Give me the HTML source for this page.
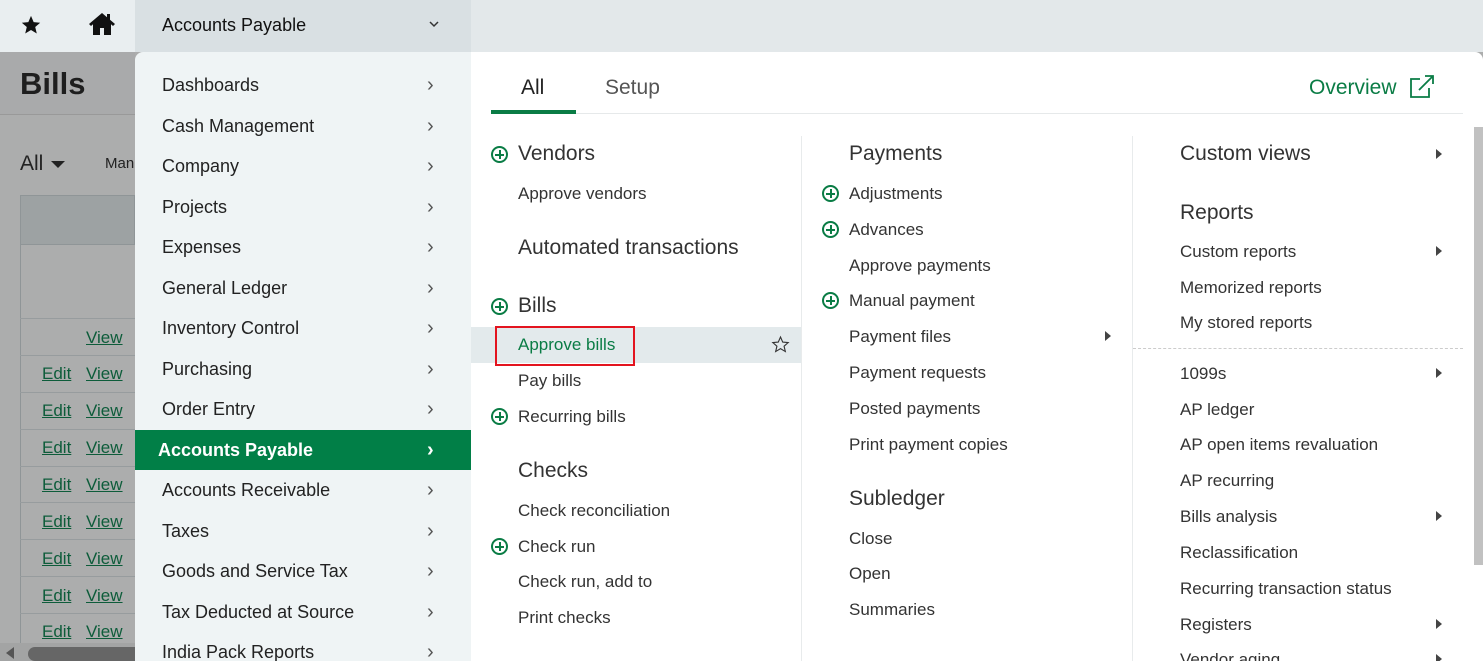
<!DOCTYPE html>
<html style="overflow:hidden;width:1483px;height:661px"><head><meta charset="utf-8"><style>
*{margin:0;padding:0;box-sizing:border-box}
body{width:1483px;height:661px;overflow:hidden;position:relative;font-family:"Liberation Sans",Arial,sans-serif;background:#acadad;color:#333}
.a{position:absolute;white-space:nowrap}
.top{position:absolute;left:0;top:0;width:1483px;height:52px;background:#e3e8ea}
.m{position:absolute;left:135px;top:52px;width:336px;height:609px;background:#eff4f5}
.mi{position:absolute;left:162px;font-size:18px;color:#222;line-height:20px}
.chev{position:absolute;left:427px;font-size:20px;color:#555;line-height:20px}
.rp{position:absolute;left:471px;top:52px;width:1012px;height:609px;background:#fff;border-top-right-radius:8px}
.h{position:absolute;font-size:21px;color:#333;line-height:24px}
.i{position:absolute;font-size:17px;color:#333;line-height:20px}
.plus{position:absolute;width:17px;height:17px;border:2px solid #0a7c45;border-radius:50%}
.plus:before{content:"";position:absolute;left:6px;top:2px;width:1.6px;height:9px;background:#0a7c45}
.plus:after{content:"";position:absolute;left:2px;top:6px;width:9px;height:1.6px;background:#0a7c45}
.tri{position:absolute;width:0;height:0;border-left:6px solid #444;border-top:5px solid transparent;border-bottom:5px solid transparent}
.ev{position:absolute;font-size:17px;color:#0d5c3a;text-decoration:underline;line-height:20px}
.hl{position:absolute;left:20px;width:116px;height:1px;background:#979c9e}
</style></head><body>
<div class="top"></div>
<div class="a" style="left:0;top:0;width:135px;height:52px;background:#e9eef0"></div>
<div class="a" style="left:135px;top:0;width:336px;height:52px;background:#d9e0e3"></div>
<svg class="a" style="left:20px;top:14px" width="22" height="22" viewBox="0 0 24 24"><path d="M12 2l2.9 6.9 7.1.6-5.4 4.7 1.7 7.1L12 17.5 5.7 21.3l1.7-7.1L2 9.5l7.1-.6z" fill="#111"/></svg>
<svg class="a" style="left:88px;top:11px" width="28" height="26" viewBox="0 0 28 26"><path d="M14 2L1 13l2 2 2-1.7V24h7v-7h4v7h7V13.3L25 15l2-2-5-4.3V3h-3v3.2z" fill="#111"/></svg>
<div class="a" style="left:162px;top:14px;font-size:18px;color:#111;line-height:22px">Accounts Payable</div>
<svg class="a" style="left:428px;top:20px" width="12" height="8" viewBox="0 0 12 8"><path d="M2 2l4 4 4-4" stroke="#333" stroke-width="1.5" fill="none"/></svg>
<div class="a" style="left:0;top:52px;width:135px;height:63px;background:#a9aaab;border-bottom:1px solid #999"></div>
<div class="a" style="left:20px;top:66px;font-size:31px;font-weight:bold;color:#1e1e1e">Bills</div>
<div class="a" style="left:20px;top:152px;font-size:21px;color:#222">All</div>
<div class="a" style="left:51px;top:161px;border-top:7px solid #222;border-left:7px solid transparent;border-right:7px solid transparent"></div>
<div class="a" style="left:105px;top:155px;font-size:15px;color:#222">Man</div>
<div class="a" style="left:20px;top:195px;width:115px;height:50px;background:#9da2a3;border:1px solid #8f9597"></div>
<div class="a" style="left:20px;top:245px;width:1px;height:400px;background:#8f9597"></div>
<div class="hl" style="top:318px"></div>
<div class="ev" style="left:86px;top:328px">View</div>
<div class="hl" style="top:355px"></div>
<div class="ev" style="left:42px;top:364px">Edit</div><div class="ev" style="left:86px;top:364px">View</div>
<div class="hl" style="top:392px"></div>
<div class="ev" style="left:42px;top:401px">Edit</div><div class="ev" style="left:86px;top:401px">View</div>
<div class="hl" style="top:429px"></div>
<div class="ev" style="left:42px;top:438px">Edit</div><div class="ev" style="left:86px;top:438px">View</div>
<div class="hl" style="top:466px"></div>
<div class="ev" style="left:42px;top:475px">Edit</div><div class="ev" style="left:86px;top:475px">View</div>
<div class="hl" style="top:502px"></div>
<div class="ev" style="left:42px;top:512px">Edit</div><div class="ev" style="left:86px;top:512px">View</div>
<div class="hl" style="top:539px"></div>
<div class="ev" style="left:42px;top:549px">Edit</div><div class="ev" style="left:86px;top:549px">View</div>
<div class="hl" style="top:576px"></div>
<div class="ev" style="left:42px;top:586px">Edit</div><div class="ev" style="left:86px;top:586px">View</div>
<div class="hl" style="top:613px"></div>
<div class="ev" style="left:42px;top:622px">Edit</div><div class="ev" style="left:86px;top:622px">View</div>
<div class="a" style="left:0;top:643px;width:135px;height:18px;background:#a3a4a4"></div>
<div class="a" style="left:6px;top:647px;border-right:8px solid #555;border-top:6px solid transparent;border-bottom:6px solid transparent"></div>
<div class="a" style="left:28px;top:647px;width:107px;height:14px;border-radius:7px 0 0 7px;background:#666"></div>
<div class="m" style="border-top-left-radius:8px"></div>
<div class="mi" style="top:75px">Dashboards</div><div class="chev" style="top:75px">›</div>
<div class="mi" style="top:116px">Cash Management</div><div class="chev" style="top:116px">›</div>
<div class="mi" style="top:156px">Company</div><div class="chev" style="top:156px">›</div>
<div class="mi" style="top:197px">Projects</div><div class="chev" style="top:197px">›</div>
<div class="mi" style="top:237px">Expenses</div><div class="chev" style="top:237px">›</div>
<div class="mi" style="top:278px">General Ledger</div><div class="chev" style="top:278px">›</div>
<div class="mi" style="top:318px">Inventory Control</div><div class="chev" style="top:318px">›</div>
<div class="mi" style="top:359px">Purchasing</div><div class="chev" style="top:359px">›</div>
<div class="mi" style="top:399px">Order Entry</div><div class="chev" style="top:399px">›</div>
<div class="a" style="left:135px;top:430px;width:336px;height:40px;background:#017f47"></div>
<div class="mi" style="left:158px;top:440px;color:#fff;font-weight:bold">Accounts Payable</div><div class="chev" style="top:440px;color:#fff;font-weight:bold">›</div>
<div class="mi" style="top:480px">Accounts Receivable</div><div class="chev" style="top:480px">›</div>
<div class="mi" style="top:521px">Taxes</div><div class="chev" style="top:521px">›</div>
<div class="mi" style="top:561px">Goods and Service Tax</div><div class="chev" style="top:561px">›</div>
<div class="mi" style="top:602px">Tax Deducted at Source</div><div class="chev" style="top:602px">›</div>
<div class="mi" style="top:642px">India Pack Reports</div><div class="chev" style="top:642px">›</div>
<div class="rp"></div>
<div class="a" style="left:521px;top:76px;font-size:21px;color:#222;line-height:24px">All</div>
<div class="a" style="left:605px;top:76px;font-size:21px;color:#555;line-height:24px">Setup</div>
<div class="a" style="left:491px;top:113px;width:972px;height:1px;background:#e6e9ea"></div>
<div class="a" style="left:491px;top:110px;width:85px;height:4px;background:#0a7c45"></div>
<div class="a" style="left:1309px;top:76px;font-size:21px;color:#0a7c45;line-height:24px">Overview</div>
<svg class="a" style="left:1409px;top:75px" width="26" height="24" viewBox="0 0 26 24"><path d="M11 4H2v18h18v-9" stroke="#0a7c45" stroke-width="1.8" fill="none"/><path d="M10 15L24 1M16 1h8v8" stroke="#0a7c45" stroke-width="1.8" fill="none"/></svg>
<div class="a" style="left:801px;top:136px;width:1px;height:525px;background:#e8ebec"></div>
<div class="a" style="left:1132px;top:136px;width:1px;height:525px;background:#e8ebec"></div>
<div class="a" style="left:1474px;top:127px;width:9px;height:438px;background:#c1c1c1"></div>
<div class="plus" style="left:491px;top:146px"></div><div class="h" style="left:518px;top:142px">Vendors</div>
<div class="i" style="left:518px;top:184px">Approve vendors</div>
<div class="h" style="left:518px;top:236px">Automated transactions</div>
<div class="plus" style="left:491px;top:298px"></div><div class="h" style="left:518px;top:294px">Bills</div>
<div class="a" style="left:471px;top:327px;width:330px;height:36px;background:#e3eaec"></div>
<div class="a" style="left:495px;top:326px;width:140px;height:40px;border:2px solid #e3141f"></div>
<div class="i" style="left:518px;top:335px;color:#0a7c45">Approve bills</div>
<svg class="a" style="left:771px;top:335px" width="19" height="19" viewBox="0 0 24 24"><path d="M12 2.5l2.8 6.4 6.9.6-5.2 4.6 1.6 6.8L12 17.3l-6.1 3.6 1.6-6.8-5.2-4.6 6.9-.6z" fill="none" stroke="#333" stroke-width="1.4"/></svg>
<div class="i" style="left:518px;top:371px">Pay bills</div>
<div class="plus" style="left:491px;top:408px"></div><div class="i" style="left:518px;top:407px">Recurring bills</div>
<div class="h" style="left:518px;top:459px">Checks</div>
<div class="i" style="left:518px;top:501px">Check reconciliation</div>
<div class="plus" style="left:491px;top:538px"></div><div class="i" style="left:518px;top:537px">Check run</div>
<div class="i" style="left:518px;top:572px">Check run, add to</div>
<div class="i" style="left:518px;top:608px">Print checks</div>
<div class="h" style="left:849px;top:142px">Payments</div>
<div class="plus" style="left:822px;top:185px"></div><div class="i" style="left:849px;top:184px">Adjustments</div>
<div class="plus" style="left:822px;top:221px"></div><div class="i" style="left:849px;top:220px">Advances</div>
<div class="i" style="left:849px;top:256px">Approve payments</div>
<div class="plus" style="left:822px;top:292px"></div><div class="i" style="left:849px;top:291px">Manual payment</div>
<div class="i" style="left:849px;top:327px">Payment files</div><div class="tri" style="left:1105px;top:331px"></div>
<div class="i" style="left:849px;top:363px">Payment requests</div>
<div class="i" style="left:849px;top:399px">Posted payments</div>
<div class="i" style="left:849px;top:435px">Print payment copies</div>
<div class="h" style="left:849px;top:487px">Subledger</div>
<div class="i" style="left:849px;top:529px">Close</div>
<div class="i" style="left:849px;top:564px">Open</div>
<div class="i" style="left:849px;top:600px">Summaries</div>
<div class="h" style="left:1180px;top:142px">Custom views</div><div class="tri" style="left:1436px;top:149px"></div>
<div class="h" style="left:1180px;top:201px">Reports</div>
<div class="i" style="left:1180px;top:242px">Custom reports</div><div class="tri" style="left:1436px;top:246px"></div>
<div class="i" style="left:1180px;top:278px">Memorized reports</div>
<div class="i" style="left:1180px;top:313px">My stored reports</div>
<div class="a" style="left:1133px;top:348px;width:330px;border-top:1px dashed #ccc"></div>
<div class="i" style="left:1180px;top:364px">1099s</div><div class="tri" style="left:1436px;top:368px"></div>
<div class="i" style="left:1180px;top:400px">AP ledger</div>
<div class="i" style="left:1180px;top:435px">AP open items revaluation</div>
<div class="i" style="left:1180px;top:471px">AP recurring</div>
<div class="i" style="left:1180px;top:507px">Bills analysis</div><div class="tri" style="left:1436px;top:511px"></div>
<div class="i" style="left:1180px;top:543px">Reclassification</div>
<div class="i" style="left:1180px;top:579px">Recurring transaction status</div>
<div class="i" style="left:1180px;top:615px">Registers</div><div class="tri" style="left:1436px;top:619px"></div>
<div class="i" style="left:1180px;top:650px">Vendor aging</div><div class="tri" style="left:1436px;top:654px"></div>
</body></html>
